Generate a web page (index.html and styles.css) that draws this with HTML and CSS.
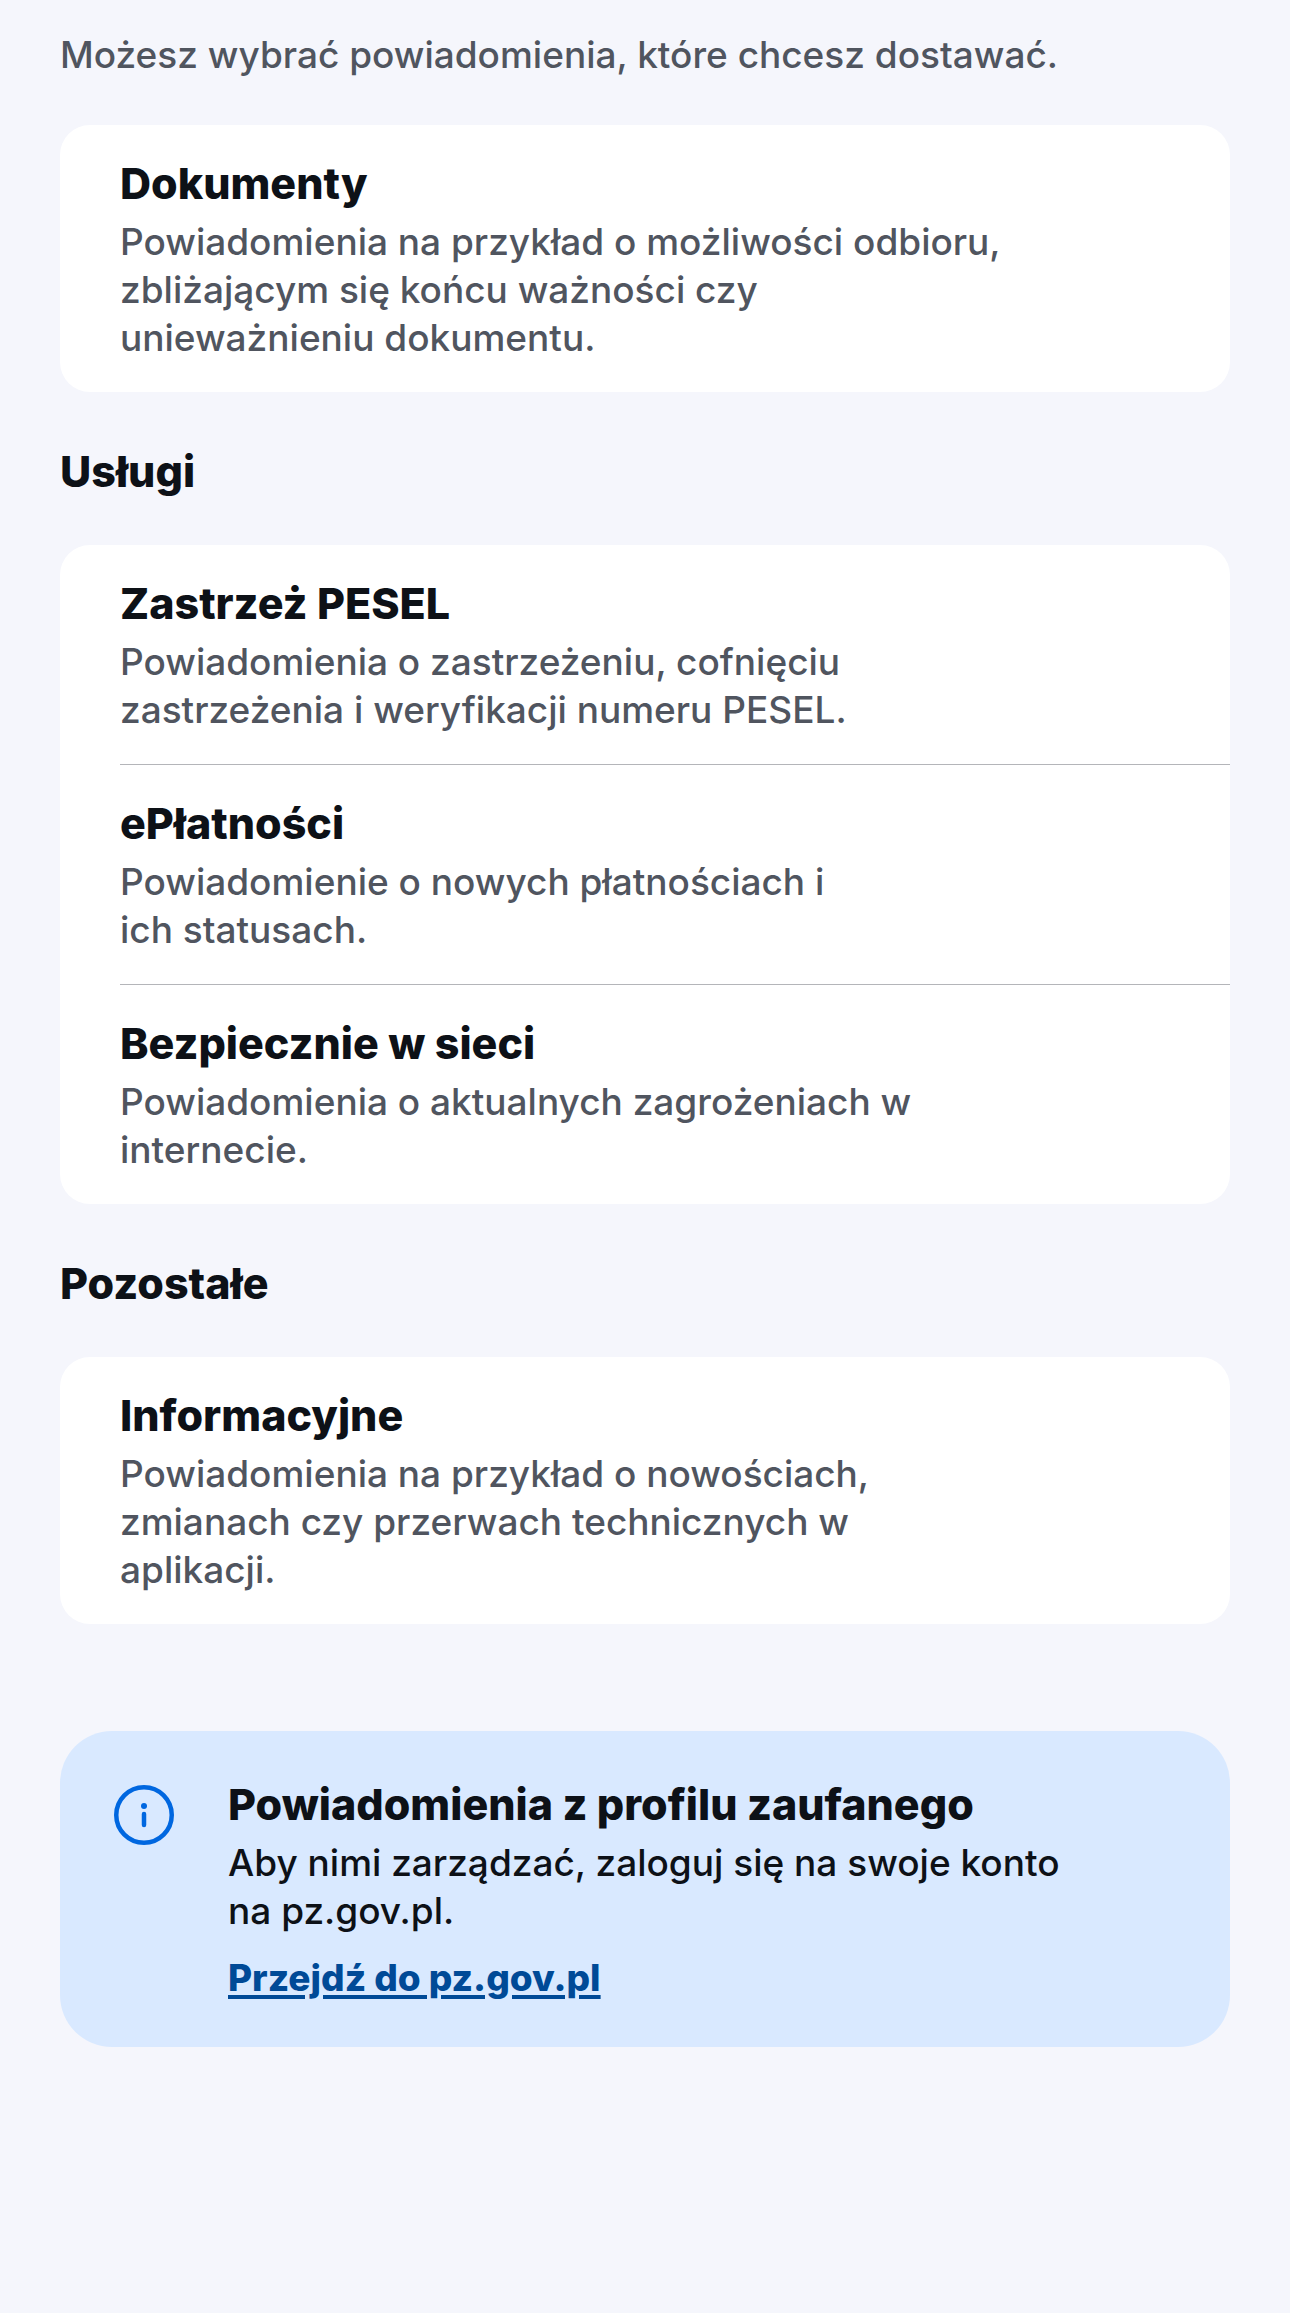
FILE: index.html
```
<!DOCTYPE html>
<html lang="pl">
<head>
<meta charset="utf-8">
<meta name="viewport" content="width=device-width, initial-scale=1">
<title>Powiadomienia</title>
<link rel="stylesheet" href="styles.css">
</head>
<body>
<main class="page">
  <p class="intro">Możesz wybrać powiadomienia, które chcesz dostawać.</p>

  <section class="card">
    <article class="item">
      <h3 class="title">Dokumenty</h3>
      <p class="text">Powiadomienia na przykład o możliwości odbioru,<br>zbliżającym się końcu ważności czy<br>unieważnieniu dokumentu.</p>
    </article>
  </section>

  <h2 class="heading">Usługi</h2>
  <section class="card">
    <article class="item">
      <h3 class="title">Zastrzeż PESEL</h3>
      <p class="text">Powiadomienia o zastrzeżeniu, cofnięciu<br>zastrzeżenia i weryfikacji numeru PESEL.</p>
    </article>
    <article class="item">
      <h3 class="title">ePłatności</h3>
      <p class="text">Powiadomienie o nowych płatnościach i<br>ich statusach.</p>
    </article>
    <article class="item">
      <h3 class="title">Bezpiecznie w sieci</h3>
      <p class="text">Powiadomienia o aktualnych zagrożeniach w<br>internecie.</p>
    </article>
  </section>

  <h2 class="heading">Pozostałe</h2>
  <section class="card">
    <article class="item">
      <h3 class="title">Informacyjne</h3>
      <p class="text">Powiadomienia na przykład o nowościach,<br>zmianach czy przerwach technicznych w<br>aplikacji.</p>
    </article>
  </section>

  <aside class="notice">
    <svg class="notice-icon" viewBox="0 0 60 60" fill="none" aria-hidden="true">
      <circle cx="30" cy="30" r="27.75" stroke="currentColor" stroke-width="4.5"/>
      <circle cx="30" cy="21" r="3" fill="currentColor"/>
      <path d="M30 29v11" stroke="currentColor" stroke-width="4.5" stroke-linecap="round"/>
    </svg>
    <div class="notice-body">
      <h3 class="title">Powiadomienia z profilu zaufanego</h3>
      <p class="text">Aby nimi zarządzać, zaloguj się na swoje konto<br>na pz.gov.pl.</p>
      <a class="link" href="#">Przejdź do pz.gov.pl</a>
    </div>
  </aside>
</main>
</body>
</html>
```
FILE: styles.css
```
* { box-sizing: border-box; }

body {
  margin: 0;
  background: #f5f6fc;
  color: #0d1117;
  font-family: Inter, "Liberation Sans", sans-serif;
}

h2, h3, p { margin: 0; }

.page { padding: 31px 60px 264px; }

.intro, .text {
  color: #50555f;
  font-size: 37px;
  font-weight: 500;
  line-height: 48px;
}

.card {
  margin-top: 46px;
  background: #fff;
  border-radius: 30px;
}

.item {
  margin-left: 60px;
  padding: 32px 60px 30px 0;
}

.item + .item { border-top: 1px solid #b4b5b9; }

.title, .heading {
  font-size: 43px;
  font-weight: 800;
  line-height: 52px;
}

.title { margin-bottom: 9px; }

.heading { margin-top: 53px; }

.heading + .card { margin-top: 48px; }

.notice {
  display: flex;
  gap: 54px;
  margin-top: 107px;
  padding: 47px 54px 45px;
  background: #d9e9ff;
  border-radius: 52px;
}

.notice-icon {
  flex: none;
  width: 60px;
  height: 60px;
  margin-top: 7px;
  color: #0067e0;
}

.notice .text { color: #0d1117; }

.link {
  display: block;
  margin-top: 19px;
  color: #004a97;
  font-size: 37px;
  font-weight: 800;
  line-height: 48px;
  text-decoration-thickness: 4px;
  text-underline-offset: 4px;
}
```
